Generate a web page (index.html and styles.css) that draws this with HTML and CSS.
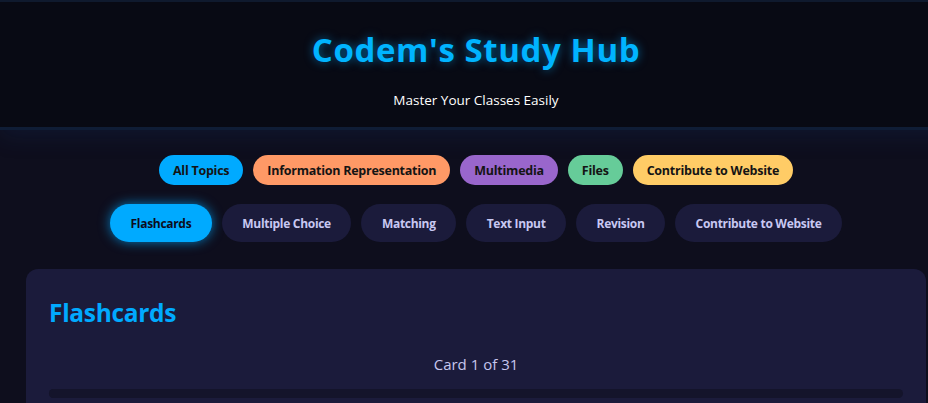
FILE: index.html
```html
<!DOCTYPE html>
<html lang="en">
<head>
<meta charset="utf-8">
<title>Codem's Study Hub</title>
<link rel="stylesheet" href="styles.css">
</head>
<body>
<div class="page">
  <header class="site-header">
    <h1 class="site-title">Codem's Study Hub</h1>
    <p class="site-subtitle">Master Your Classes Easily</p>
  </header>
  <nav class="topics">
    <button class="topic topic-all">All Topics</button>
    <button class="topic topic-info">Information Representation</button>
    <button class="topic topic-media">Multimedia</button>
    <button class="topic topic-files">Files</button>
    <button class="topic topic-contrib">Contribute to Website</button>
  </nav>
  <nav class="modes">
    <button class="mode mode-active">Flashcards</button>
    <button class="mode">Multiple Choice</button>
    <button class="mode">Matching</button>
    <button class="mode">Text Input</button>
    <button class="mode">Revision</button>
    <button class="mode">Contribute to Website</button>
  </nav>
  <main class="card">
    <h2 class="card-title">Flashcards</h2>
    <p class="card-count">Card 1 of 31</p>
    <div class="progress"><div class="progress-fill" style="width:3%"></div></div>
  </main>
</div>
</body>
</html>
```
FILE: styles.css
```css
html, body {
  margin: 0;
  padding: 0;
  overflow: hidden;
}
body {
  background: #0e0e1d;
  font-family: "Open Sans", "Noto Sans", sans-serif;
  color: #e6e6f5;
}
.page {
  width: 952px;
}
.site-header {
  background: #080a14;
  border-top: 2px solid #0f1a2e;
  border-bottom: 3px solid #0f1d36;
  box-shadow: 0 6px 22px rgba(20, 60, 130, 0.18);
  text-align: center;
  height: 125px;
  box-sizing: content-box;
}
.site-title {
  margin: 0;
  padding-top: 26px;
  font-size: 33px;
  line-height: 44px;
  font-weight: 700;
  color: #00b4ff;
  letter-spacing: 0.6px;
  text-shadow: 0 0 10px rgba(0, 170, 255, 0.55);
}
.site-subtitle {
  margin: 0;
  padding-top: 18px;
  font-size: 13.5px;
  line-height: 20px;
  color: #ffffff;
}
.topics, .modes {
  display: flex;
  justify-content: center;
  gap: 10px;
}
.topics {
  margin-top: 25px;
}
.modes {
  margin-top: 19px;
}
.topic, .mode {
  border: none;
  font-family: inherit;
  font-weight: 700;
  font-size: 12.5px;
  letter-spacing: -0.25px;
  border-radius: 999px;
  cursor: pointer;
}
.topic {
  height: 30px;
  padding: 0 14px;
  color: #141414;
}
.topic-all { background: #00aaff; }
.topic-info { background: #ff9966; }
.topic-media { background: #9966cc; }
.topic-files { background: #66cc99; }
.topic-contrib { background: #ffcc66; }
.mode {
  height: 38px;
  padding: 0 20.5px;
  background: #1b1b3b;
  color: #c8c8f2;
  font-size: 12px;
  letter-spacing: -0.3px;
}
.mode-active {
  background: #00aaff;
  color: #0c0c1c;
  box-shadow: 0 0 12px rgba(0, 170, 255, 0.7);
}
.card {
  margin: 27px 26px 0 26px;
  background: #1b1b3b;
  border-radius: 12px;
  padding: 28px 23px 40px;
}
.card-title {
  margin: 0;
  font-size: 24.5px;
  line-height: 32px;
  font-weight: 700;
  color: #00aaff;
  letter-spacing: -0.3px;
}
.card-count {
  margin: 24px 0 0;
  text-align: center;
  font-size: 15px;
  line-height: 22px;
  color: #c6c6ee;
}
.progress {
  margin-top: 14px;
  height: 9px;
  border-radius: 5px;
  background: #14142b;
  overflow: hidden;
}
.progress-fill {
  height: 100%;
  background: #14142b;
}
```
